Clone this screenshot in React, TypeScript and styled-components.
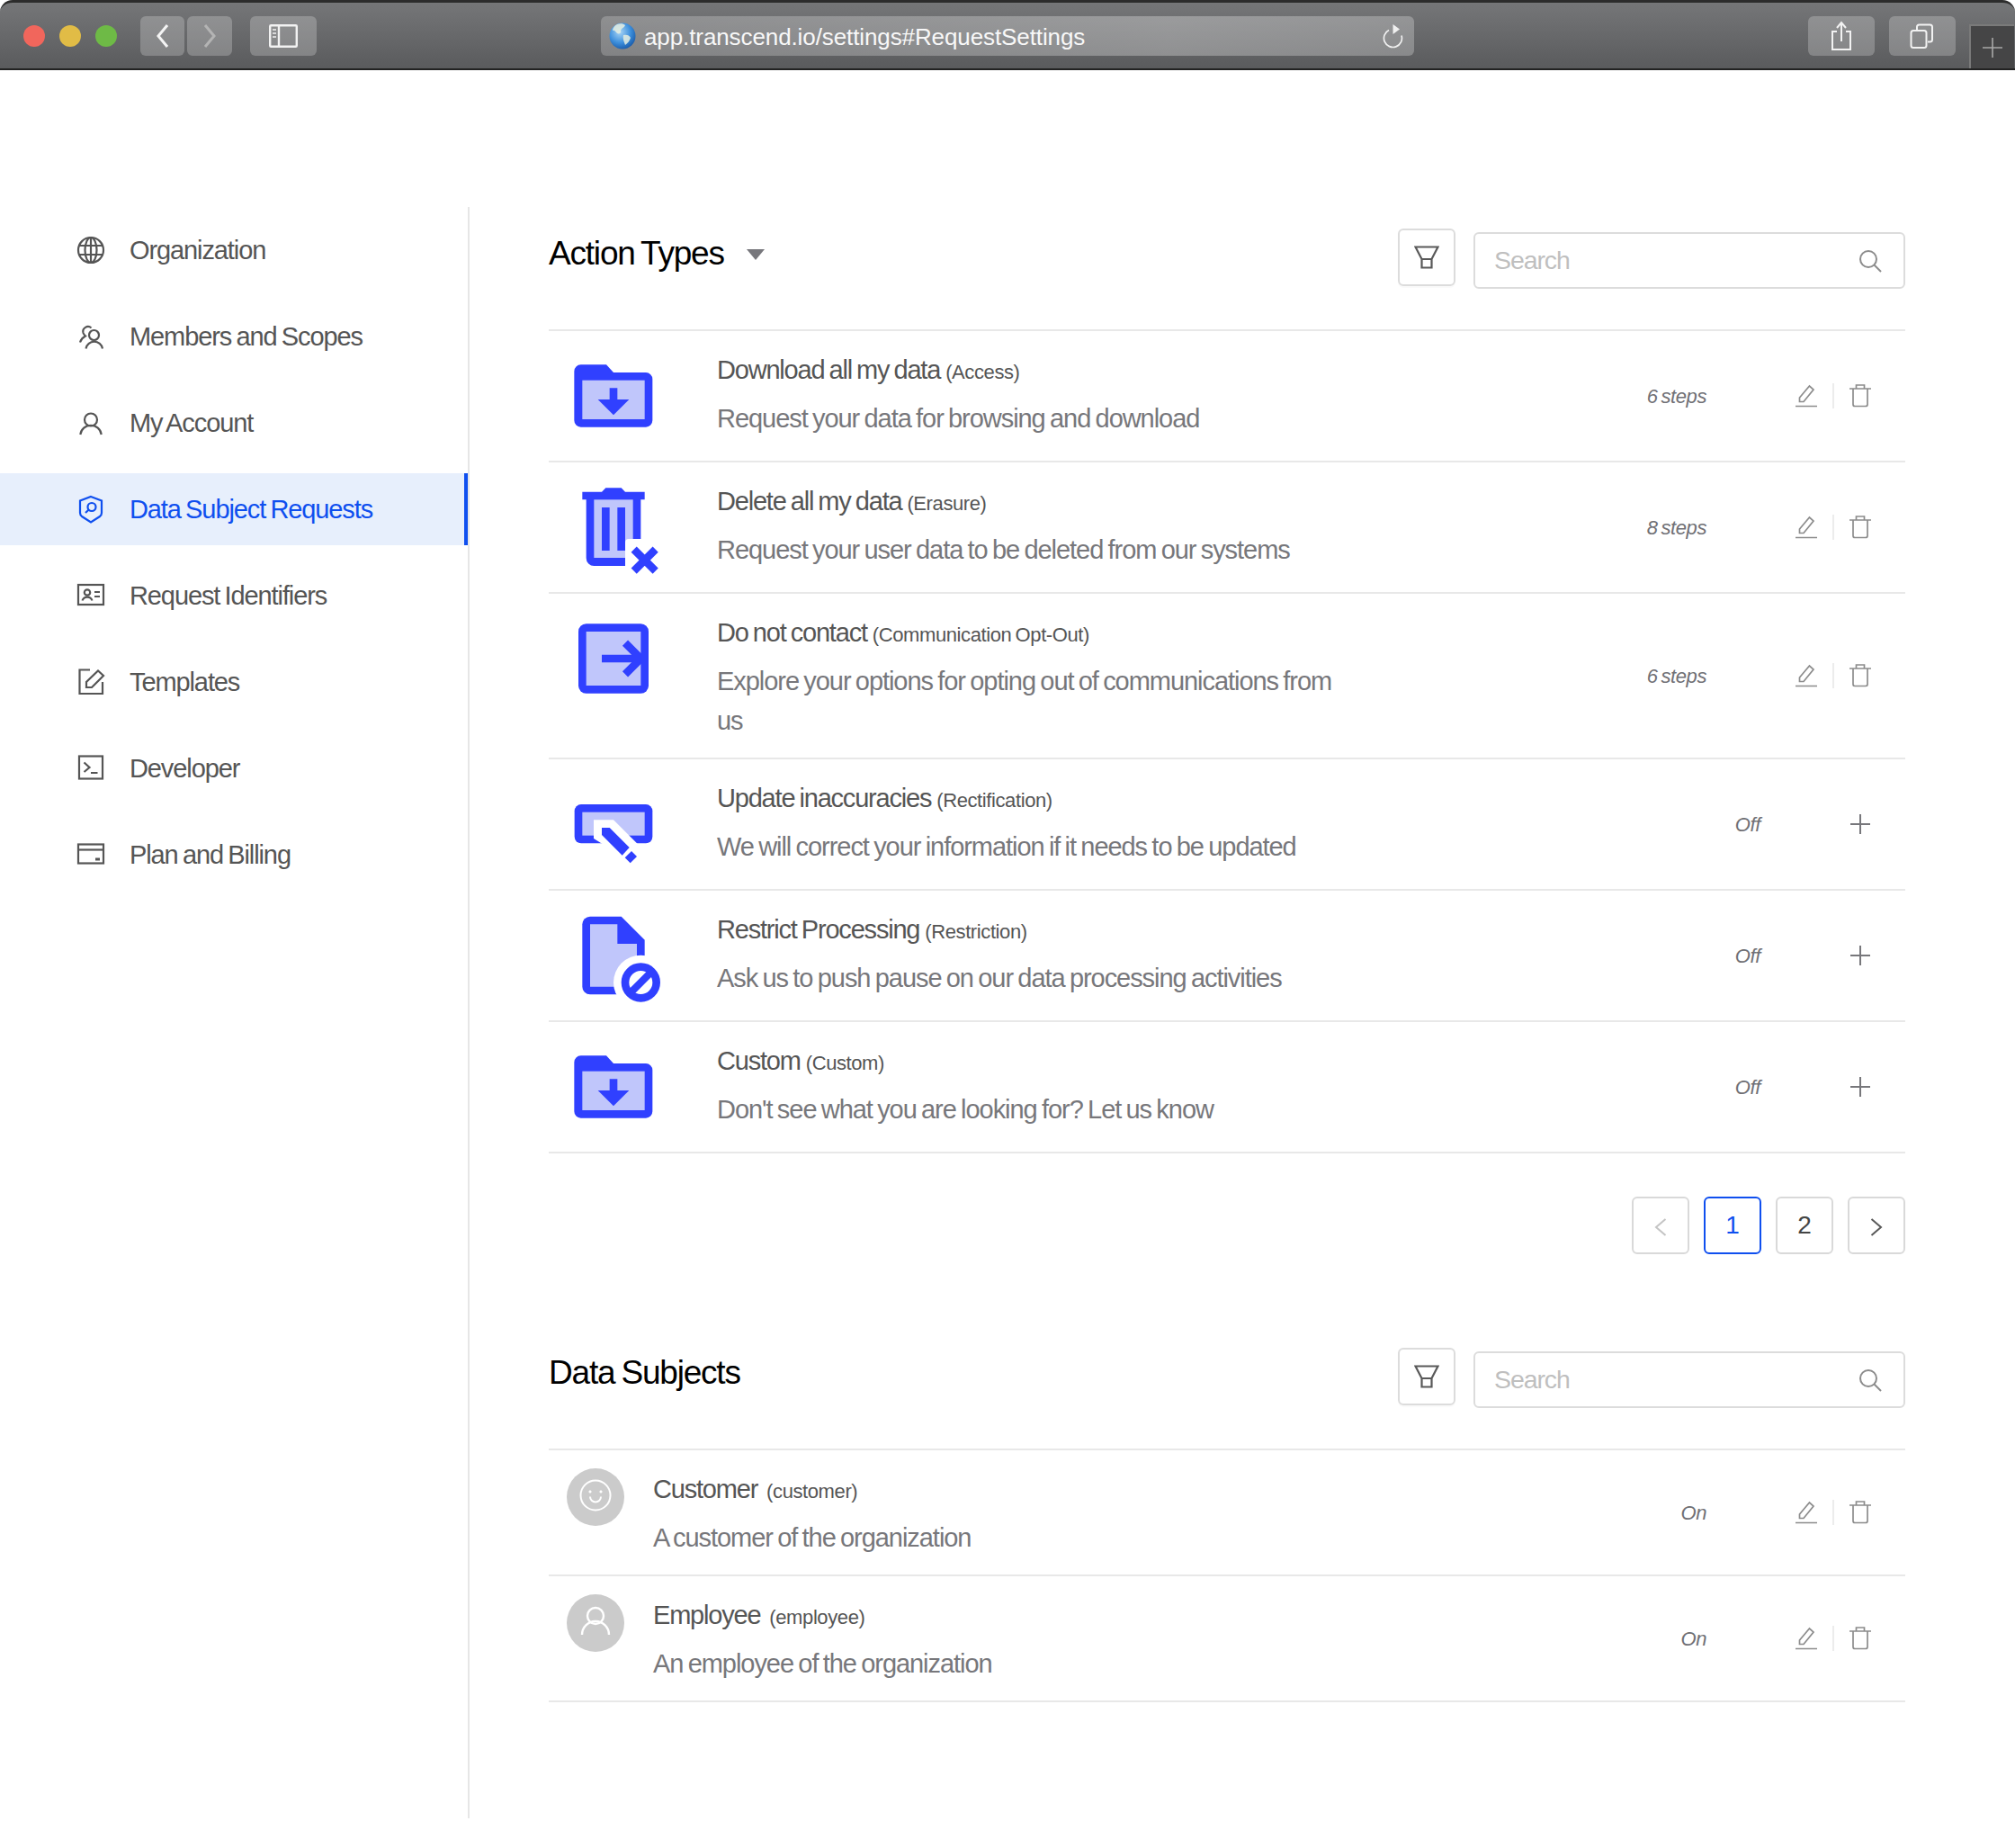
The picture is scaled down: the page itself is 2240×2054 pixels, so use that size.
import React from "react";
import styled, { createGlobalStyle } from "styled-components";

const BLUE = "#3040ff";
const LIGHT = "#c0c6fb";
const FONT = '"Liberation Sans", Arial, sans-serif';

const Global = createGlobalStyle`
  html, body { margin: 0; padding: 0; background: #fff; }
  body { font-family: ${FONT}; width: 2240px; min-height: 2054px; }
  * { box-sizing: border-box; }
`;

const Page = styled.div`
  width: 2240px;
  height: 2054px;
  display: flex;
  flex-direction: column;
  overflow: hidden;
  background: #fff;
`;
const Titlebar = styled.header`
  height: 78px;
  flex: none;
  display: flex;
  align-items: flex-start;
  padding: 15px 0 0 26px;
  background: linear-gradient(180deg, #757678 0%, #5a5b5d 100%);
  border-top: 3px solid #2c2c2c;
  border-bottom: 2px solid #222;
  border-radius: 14px 14px 0 0;
`;
const Lights = styled.div`
  display: flex;
  gap: 16px;
  margin: 10px 26px 0 0;
`;
const Light = styled.span<{ $c: string }>`
  width: 24px;
  height: 24px;
  border-radius: 50%;
  background: ${(p) => p.$c};
`;
const ChromeButton = styled.div<{ $w: number; $ml?: number; $mr?: number }>`
  width: ${(p) => p.$w}px;
  height: 44px;
  margin-left: ${(p) => p.$ml ?? 0}px;
  margin-right: ${(p) => p.$mr ?? 0}px;
  border-radius: 6px;
  background: rgba(255, 255, 255, 0.23);
  display: flex;
  align-items: center;
  justify-content: center;
  flex: none;
`;
const UrlBar = styled.div`
  width: 904px;
  height: 44px;
  margin-left: 316px;
  flex: none;
  border-radius: 6px;
  background: linear-gradient(90deg, rgba(255,255,255,.22), rgba(255,255,255,.3) 70%, rgba(255,255,255,.26));
  display: flex;
  align-items: center;
  padding: 0 11px 0 9px;
`;
const UrlText = styled.span`
  color: #f8f8f8;
  font-size: 26px;
  line-height: 44px;
  padding-top: 2px;
  margin-left: 9px;
  flex: 1;
  letter-spacing: -0.1px;
  white-space: nowrap;
`;
const NewTab = styled.div`
  width: 50px;
  height: 49px;
  margin: 9px 0 0 15px;
  background: #454546;
  border-left: 2px solid #7a7a7a;
  border-top: 2px solid #7a7a7a;
  display: flex;
  align-items: center;
  justify-content: center;
`;

const Body = styled.div`
  display: flex;
  flex: 1;
  align-items: flex-start;
  padding-top: 152px;
`;
const Sidebar = styled.nav`
  width: 522px;
  height: 1791px;
  flex: none;
  border-right: 2px solid #e6e6e6;
  padding-top: 8px;
  display: flex;
  flex-direction: column;
  gap: 16px;
`;
const NavItem = styled.div<{ $active?: boolean }>`
  position: relative;
  height: 80px;
  display: flex;
  align-items: center;
  gap: 27px;
  padding-left: 85px;
  font-size: 29px;
  letter-spacing: -1.1px;
  word-spacing: -1.7px;
  color: ${(p) => (p.$active ? "#0f4fef" : "#555")};
  background: ${(p) => (p.$active ? "#e7effc" : "transparent")};
  &::after {
    content: "";
    display: ${(p) => (p.$active ? "block" : "none")};
    position: absolute;
    right: 0;
    top: 0;
    bottom: 0;
    width: 4px;
    background: #0f4fef;
  }
`;
const NavIcon = styled.svg`
  width: 32px;
  height: 32px;
  flex: none;
  fill: none;
  stroke: currentColor;
  stroke-width: 2.2;
`;

const Main = styled.main`
  flex: 1;
  padding: 24px 122px 0 88px;
`;
const SectionHeader = styled.div`
  display: flex;
  align-items: flex-start;
  height: 64px;
  margin-bottom: 48px;
`;
const SectionTitle = styled.h2`
  flex: 1;
  margin: 0;
  display: flex;
  align-items: center;
  height: 56px;
  font-size: 37px;
  font-weight: 400;
  letter-spacing: -1.2px;
  word-spacing: -2px;
  color: #000;
`;
const Caret = styled.span`
  width: 0;
  height: 0;
  margin: 2px 0 0 25px;
  border-left: 10px solid transparent;
  border-right: 10px solid transparent;
  border-top: 12px solid #77777c;
`;
const FilterButton = styled.div`
  width: 64px;
  height: 64px;
  flex: none;
  border: 2px solid #dcdcdc;
  border-radius: 6px;
  display: flex;
  align-items: center;
  justify-content: center;
  box-shadow: 0 2px 0 rgba(0,0,0,.02);
`;
const SearchBox = styled.div`
  width: 480px;
  height: 63px;
  flex: none;
  margin: 4px 0 0 20px;
  border: 2px solid #dcdcdc;
  border-radius: 6px;
  display: flex;
  align-items: center;
  justify-content: space-between;
  padding: 0 24px 0 21px;
  font-size: 28.5px;
  letter-spacing: -1.1px;
  color: #bfbfbf;
`;
const List = styled.div`
  border-top: 2px solid #e8e8e8;
`;
const Row = styled.div<{ $h: number }>`
  height: ${(p) => p.$h}px;
  display: flex;
  align-items: flex-start;
  border-bottom: 2px solid #e8e8e8;
`;
const IconCell = styled.div`
  width: 187px;
  flex: none;
  padding: 12px 0 0 12px;
`;
const AvatarCell = styled.div`
  width: 116px;
  flex: none;
  padding: 20px 0 0 20px;
`;
const Avatar = styled.div`
  width: 64px;
  height: 64px;
  border-radius: 50%;
  background: #cbcbcb;
`;
const RowText = styled.div`
  padding-top: 21px;
  width: 700px;
  flex: none;
`;
const RowTitle = styled.div`
  line-height: 44px;
  font-size: 29px;
  letter-spacing: -1.2px;
  word-spacing: -1.7px;
  color: #555;
  white-space: nowrap;
`;
const RowCode = styled.span<{ $gap?: number }>`
  font-size: 22px;
  letter-spacing: -0.4px;
  word-spacing: -1.5px;
  margin-left: ${(p) => p.$gap ?? 6}px;
`;
const RowDesc = styled.div`
  margin-top: 7px;
  line-height: 44px;
  font-size: 29px;
  letter-spacing: -1.05px;
  word-spacing: -1.7px;
  color: #77777b;
`;
const RowEnd = styled.div`
  margin-left: auto;
  align-self: center;
  display: flex;
  align-items: center;
  padding-right: 38px;
  flex: none;
`;
const Meta = styled.span`
  font-size: 22px;
  font-style: italic;
  color: #707075;
  letter-spacing: -0.4px;
  word-spacing: -2px;
  margin: 2px 99px 0 0;
`;
const Sep = styled.span`
  width: 2px;
  height: 28px;
  background: #ececec;
  margin: 0 17px;
`;
const Pager = styled.div`
  display: flex;
  justify-content: flex-end;
  gap: 16px;
  margin: 48px 0 104px;
`;
const PageBtn = styled.div<{ $active?: boolean }>`
  width: 64px;
  height: 64px;
  border: 2px solid ${(p) => (p.$active ? "#0f4fef" : "#d9d9d9")};
  border-radius: 6px;
  display: flex;
  align-items: center;
  justify-content: center;
  font-size: 28px;
  color: ${(p) => (p.$active ? "#0f4fef" : "#444")};
`;

const Svg = styled.svg`
  display: block;
  flex: none;
`;
const PagerChevron = styled.svg`
  width: 14px;
  height: 20px;
  margin-top: 3px;
  fill: none;
  stroke-width: 2;
`;

/* Chrome icons */
const ChevL = ({ c }: { c: string }) => (
  <Svg width="18" height="30" viewBox="0 0 18 30"><path d="M14 3 4 15l10 12" fill="none" stroke={c} strokeWidth="3" /></Svg>
);
const ChevR = ({ c }: { c: string }) => (
  <Svg width="18" height="30" viewBox="0 0 18 30"><path d="M4 3l10 12L4 27" fill="none" stroke={c} strokeWidth="3" /></Svg>
);
const SidebarGlyph = () => (
  <Svg width="32" height="26" viewBox="0 0 32 26" fill="none" stroke="#f2f2f2" strokeWidth="2.4">
    <rect x="1.2" y="1.2" width="29.6" height="23.6" rx="1" />
    <path d="M11 1v24" />
    <path d="M4 6h4M4 10h4M4 14h4" strokeWidth="1.6" />
  </Svg>
);
const GlobeGlyph = () => (
  <Svg width="30" height="34" viewBox="0 0 30 34">
    <defs>
      <radialGradient id="gl" cx="0.4" cy="0.35" r="0.75">
        <stop offset="0" stopColor="#a7d4f5" />
        <stop offset="0.55" stopColor="#3d8fdc" />
        <stop offset="1" stopColor="#124f9e" />
      </radialGradient>
    </defs>
    <circle cx="15" cy="17" r="14.5" fill="url(#gl)" />
    <path d="M9 4c3-1 7-1 9 1-1 3-4 3-5 6 1 3-2 4-4 3-2-2-3-4-5-3 0-3 3-6 5-7zM16 16c3-1 7 0 8 3-1 3-3 6-6 8-1-3-3-7-2-11z" fill="#e6efe0" opacity=".85" />
  </Svg>
);
const ReloadGlyph = () => (
  <Svg width="24" height="28" viewBox="0 0 24 28" fill="none">
    <path d="M7 7.500a10 10 0 1 0 14 6" stroke="#f0f0f0" strokeWidth="1.700" />
    <path d="M11.500 1v11l7.500-5.500z" fill="#f0f0f0" />
  </Svg>
);
const ShareGlyph = () => (
  <Svg width="24" height="34" viewBox="0 0 24 34" fill="none" stroke="#f2f2f2" strokeWidth="2">
    <path d="M7 12H2v20h20V12h-5M12 23V3M7 8l5-6 5 6" />
  </Svg>
);
const TabsGlyph = () => (
  <Svg width="28" height="28" viewBox="0 0 28 28" fill="none" stroke="#f2f2f2" strokeWidth="2">
    <rect x="1.5" y="8" width="17" height="19" rx="2.5" />
    <path d="M8 7V4a2.500 2.500 0 0 1 2.500-2.500h12A2.500 2.500 0 0 1 25 4v14a2.500 2.500 0 0 1-2.500 2.500H20" />
  </Svg>
);
const PlusGlyph = () => (
  <Svg width="24" height="24" viewBox="0 0 24 24"><path d="M12 1v22M1 12h22" stroke="#a8a8a8" strokeWidth="1.6" /></Svg>
);

/* Sidebar icons */
const IGlobe = () => (
  <NavIcon viewBox="0 0 32 32">
    <circle cx="16" cy="16" r="14" />
    <ellipse cx="16" cy="16" rx="6.500" ry="14" />
    <path d="M16 2v28M2.800 11h26.400M2.800 21h26.400" />
  </NavIcon>
);
const IMembers = () => (
  <NavIcon viewBox="0 0 32 32">
    <circle cx="19.500" cy="14.500" r="5.500" />
    <path d="M10.500 29.500a9.400 9.400 0 0 1 18.500 0" />
    <path d="M16.500 6.500a5.500 5.500 0 0 0-9 5.500c.5 1.500 1.500 2.500 2.500 3.500-3 1.500-5 4-6 7" />
  </NavIcon>
);
const IAccount = () => (
  <NavIcon viewBox="0 0 32 32">
    <circle cx="16" cy="12.500" r="7" />
    <path d="M4.300 29a11.800 11.800 0 0 1 23.400 0" />
  </NavIcon>
);
const IShield = () => (
  <NavIcon viewBox="0 0 32 32">
    <path d="M16 2l12 4.500V20c0 2-.8 3-2 4l-10 6.500L6 24c-1.200-1-2-2-2-4V6.500z" />
    <circle cx="17" cy="13.500" r="4.500" />
    <path d="M13.700 16.500 10 20" />
  </NavIcon>
);
const IIdCard = () => (
  <NavIcon viewBox="0 0 32 32">
    <rect x="2" y="4" width="28" height="22" />
    <circle cx="12" cy="12.500" r="3.200" />
    <path d="M6.500 21.500a5.800 5.800 0 0 1 11 0M20 12h6M20 17h6" />
  </NavIcon>
);
const ITemplates = () => (
  <NavIcon viewBox="0 0 32 32">
    <path d="M15 2.500H3.500v26.500h25.500V16" />
    <path d="M11 22v-6L24 3.500l6 5.500L17 22z" />
  </NavIcon>
);
const IDev = () => (
  <NavIcon viewBox="0 0 32 32">
    <rect x="3" y="2.500" width="26" height="25" />
    <path d="M8.500 9.500l6 5.500-6 5M16 21h7.500" />
  </NavIcon>
);
const IPlan = () => (
  <NavIcon viewBox="0 0 32 32">
    <rect x="2" y="4.500" width="28" height="21" />
    <path d="M2 10.500h28" />
    <path d="M21 21h5" strokeWidth="3" />
  </NavIcon>
);

/* Action type illustrations; coordinates traced at 3x */
const Illus = ({ y, children }: { y: number; children: React.ReactNode }) => (
  <Svg width="120" height="120" viewBox={`66 ${y} 360 360`}>{children}</Svg>
);
const FolderIcon = () => (
  <Illus y={0}>
    <path fill={BLUE} d="M115 98a22 22 0 0 1 22-22h85l24 26h108a22 22 0 0 1 22 22v138a22 22 0 0 1-22 22H137a22 22 0 0 1-22-22z" />
    <rect x="142" y="128" width="208" height="130" fill={LIGHT} />
    <path fill={BLUE} d="M233 154h26v38h39l-52 52-52-52h39z" />
  </Illus>
);
const TrashIcon = () => (
  <Illus y={438}>
    <path fill={BLUE} d="M142 500h65l13-13h52l13 13h65v26h-13v195a26 26 0 0 1-26 26H181a26 26 0 0 1-26-26V526h-13z" />
    <rect x="181" y="526" width="130" height="194" fill={LIGHT} />
    <rect x="207" y="552" width="26" height="144" fill={BLUE} />
    <rect x="259" y="552" width="26" height="144" fill={BLUE} />
    <path fill="#fff" d="M285 669a12 12 0 0 1 12-12h55v100h-67z" />
    <path d="M314 692l72 72M386 692l-72 72" stroke={BLUE} strokeWidth="26" fill="none" />
  </Illus>
);
const OptOutIcon = () => (
  <Illus y={876}>
    <rect x="129" y="940" width="234" height="232" rx="26" fill={BLUE} />
    <rect x="155" y="966" width="182" height="180" fill={LIGHT} />
    <path d="M207 1056h130" stroke={BLUE} strokeWidth="26" fill="none" />
    <path d="M285 1004l52 52-52 52" stroke={BLUE} strokeWidth="26" fill="none" />
  </Illus>
);
const RectifyIcon = () => (
  <Illus y={-12}>
    <rect x="116" y="102" width="260" height="130" rx="22" fill={BLUE} />
    <rect x="142" y="128" width="208" height="78" fill={LIGHT} />
    <path fill="#fff" d="M180 154h66l84 84-44 44-106-66z" />
    <path fill={BLUE} d="M207 180h26l66 66-24 26-68-68z" />
    <path fill={BLUE} d="M306 258l18 18-22 22-18-18z" />
  </Illus>
);
const RestrictIcon = () => (
  <Illus y={426}>
    <path fill={BLUE} d="M168 476h104l78 78v182H168a26 26 0 0 1-26-26V502a26 26 0 0 1 26-26z" />
    <path fill={LIGHT} d="M168 502h91v65h65v143H168z" />
    <circle cx="337" cy="696" r="91" fill="#fff" />
    <circle cx="337" cy="696" r="52" fill="#fff" stroke={BLUE} strokeWidth="26" />
    <path d="M300 733l74-74" stroke={BLUE} strokeWidth="24" fill="none" />
  </Illus>
);

/* Row tools */
const EditIcon = () => (
  <Svg width="24" height="26" viewBox="0 0 24 26" fill="none" stroke="#8c8c8c" strokeWidth="1.700">
    <path d="M4.500 19.500V15L15.500 2l4.500 4L9 19.500zM0 24.500h24" />
  </Svg>
);
const BinIcon = () => (
  <Svg width="24" height="26" viewBox="0 0 24 26" fill="none" stroke="#8c8c8c" strokeWidth="1.700">
    <path d="M0 5h24M4 5v17.500a2 2 0 0 0 2 2h12a2 2 0 0 0 2-2V5M7.500 5V1h9v4" />
  </Svg>
);
const AddIcon = () => (
  <Svg width="24" height="24" viewBox="0 0 24 24"><path d="M12 1v22M1 12h22" stroke="#77777b" strokeWidth="2" /></Svg>
);
const FilterIcon = () => (
  <Svg width="28" height="26" viewBox="0 0 28 26" fill="none" stroke="#595959" strokeWidth="2.200">
    <path d="M1.500 1.500h25L19.500 15h-11zM8.500 15v9.500h11V15" />
  </Svg>
);
const SearchIcon = () => (
  <Svg width="26" height="26" viewBox="0 0 26 26" fill="none" stroke="#8c8c8c" strokeWidth="2">
    <circle cx="11" cy="11" r="9" />
    <path d="M17.500 17.500 25 25" />
  </Svg>
);
const SmileIcon = () => (
  <Svg width="64" height="64" viewBox="0 0 64 64" fill="none" stroke="#fff" strokeWidth="2">
    <circle cx="32" cy="30" r="16.500" />
    <circle cx="26" cy="26" r="1.200" fill="#fff" strokeWidth="0.800" />
    <circle cx="38" cy="26" r="1.200" fill="#fff" strokeWidth="0.800" />
    <path d="M26 31.500a6 6 0 0 0 12 0" />
  </Svg>
);
const UserIcon = () => (
  <Svg width="64" height="64" viewBox="0 0 64 64" fill="none" stroke="#fff" strokeWidth="2.400">
    <circle cx="32" cy="24" r="9" />
    <path d="M17 45a15 15 0 0 1 30 0" />
  </Svg>
);

const nav = [
  { label: "Organization", icon: <IGlobe /> },
  { label: "Members and Scopes", icon: <IMembers /> },
  { label: "My Account", icon: <IAccount /> },
  { label: "Data Subject Requests", icon: <IShield />, active: true },
  { label: "Request Identifiers", icon: <IIdCard /> },
  { label: "Templates", icon: <ITemplates /> },
  { label: "Developer", icon: <IDev /> },
  { label: "Plan and Billing", icon: <IPlan /> },
];

const actions = [
  { t: "Download all my data", c: "(Access)", d: "Request your data for browsing and download", m: "6 steps", icon: <FolderIcon /> },
  { t: "Delete all my data", c: "(Erasure)", d: "Request your user data to be deleted from our systems", m: "8 steps", icon: <TrashIcon /> },
  { t: "Do not contact", c: "(Communication Opt-Out)", d: "Explore your options for opting out of communications from us", m: "6 steps", icon: <OptOutIcon />, h: 184 },
  { t: "Update inaccuracies", c: "(Rectification)", d: "We will correct your information if it needs to be updated", m: "Off", icon: <RectifyIcon /> },
  { t: "Restrict Processing", c: "(Restriction)", d: "Ask us to push pause on our data processing activities", m: "Off", icon: <RestrictIcon /> },
  { t: "Custom", c: "(Custom)", d: "Don't see what you are looking for? Let us know", m: "Off", icon: <FolderIcon /> },
];

const subjects = [
  { t: "Customer", c: "(customer)", d: "A customer of the organization", icon: <SmileIcon /> },
  { t: "Employee", c: "(employee)", d: "An employee of the organization", icon: <UserIcon /> },
];

const Tools = () => (
  <>
    <EditIcon />
    <Sep />
    <BinIcon />
  </>
);

const Head = ({ title, caret }: { title: string; caret?: boolean }) => (
  <SectionHeader>
    <SectionTitle>
      {title}
      {caret && <Caret />}
    </SectionTitle>
    <FilterButton><FilterIcon /></FilterButton>
    <SearchBox>Search<SearchIcon /></SearchBox>
  </SectionHeader>
);

export default function App() {
  return (
    <Page>
      <Global />
      <Titlebar>
        <Lights>
          <Light $c="#f1665c" />
          <Light $c="#e1bc46" />
          <Light $c="#6eba46" />
        </Lights>
        <ChromeButton $w={49} $mr={3}><ChevL c="#f4f4f4" /></ChromeButton>
        <ChromeButton $w={50}><ChevR c="#b4b4b4" /></ChromeButton>
        <ChromeButton $w={74} $ml={20}><SidebarGlyph /></ChromeButton>
        <UrlBar>
          <GlobeGlyph />
          <UrlText>app.transcend.io/settings#RequestSettings</UrlText>
          <ReloadGlyph />
        </UrlBar>
        <ChromeButton $w={74} $ml={438} $mr={16}><ShareGlyph /></ChromeButton>
        <ChromeButton $w={74}><TabsGlyph /></ChromeButton>
        <NewTab><PlusGlyph /></NewTab>
      </Titlebar>
      <Body>
        <Sidebar>
          {nav.map((n) => (
            <NavItem key={n.label} $active={n.active}>
              {n.icon}
              {n.label}
            </NavItem>
          ))}
        </Sidebar>
        <Main>
          <Head title="Action Types" caret />
          <List>
            {actions.map((a) => (
              <Row key={a.t} $h={a.h ?? 146}>
                <IconCell>{a.icon}</IconCell>
                <RowText>
                  <RowTitle>{a.t}<RowCode>{a.c}</RowCode></RowTitle>
                  <RowDesc>{a.d}</RowDesc>
                </RowText>
                <RowEnd>
                  <Meta>{a.m}</Meta>
                  {a.m === "Off" ? <AddIcon /> : <Tools />}
                </RowEnd>
              </Row>
            ))}
          </List>
          <Pager>
            <PageBtn>
              <PagerChevron viewBox="0 0 14 20" stroke="#c4c4c4"><path d="M12.500 1 2 10l10.500 9" /></PagerChevron>
            </PageBtn>
            <PageBtn $active>1</PageBtn>
            <PageBtn>2</PageBtn>
            <PageBtn>
              <PagerChevron viewBox="0 0 14 20" stroke="#595959"><path d="M1.500 1 12 10 1.500 19" /></PagerChevron>
            </PageBtn>
          </Pager>
          <Head title="Data Subjects" />
          <List>
            {subjects.map((s) => (
              <Row key={s.t} $h={140}>
                <AvatarCell><Avatar>{s.icon}</Avatar></AvatarCell>
                <RowText>
                  <RowTitle>{s.t}<RowCode $gap={10}>{s.c}</RowCode></RowTitle>
                  <RowDesc>{s.d}</RowDesc>
                </RowText>
                <RowEnd>
                  <Meta>On</Meta>
                  <Tools />
                </RowEnd>
              </Row>
            ))}
          </List>
        </Main>
      </Body>
    </Page>
  );
}
